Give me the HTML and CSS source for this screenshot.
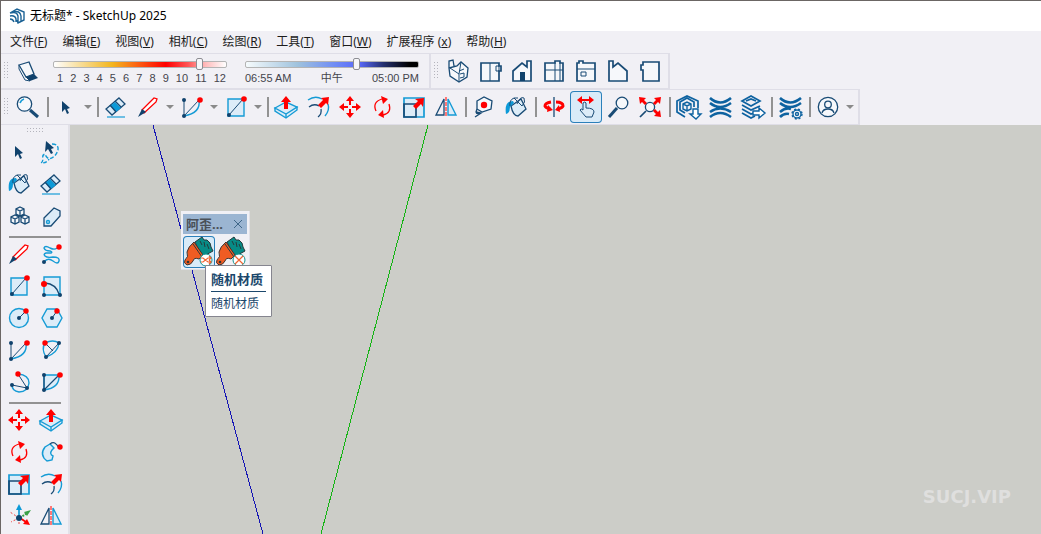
FILE: index.html
```html
<!DOCTYPE html>
<html lang="zh-CN">
<head>
<meta charset="utf-8">
<title>无标题* - SketchUp 2025</title>
<link rel="stylesheet" href="styles.css">
</head>
<body>
<svg class="sprite" aria-hidden="true">
  <symbol id="i-shadow" viewBox="0 0 32 32"><path class="pale ln thin" d="M7 10v4l6 11 5 1-4-4"/><path class="pale ln" d="M7 10l10-3 5 12-8 3z"/><path class="navy" d="M14 22l8-3 4 4-8 3z"/></symbol>
  <symbol id="i-iso" viewBox="0 0 32 32"><path class="pale ln" d="M7 13l8-2 4-4 7 6-1 9-8 5-9-6zM7 13V6l4-1 1 6"/><path class="ln thin" d="M8 13l9 6v7M17 19l2-12M17 16l5-2M18 19l4-1v4l-4 1"/></symbol>
  <symbol id="i-top" viewBox="0 0 32 32"><path class="pale ln thick" d="M7 8h18v3h2v5h-2v10H7z"/><path class="ln thin" d="M16 8v18M22 11h3v5h-3z"/></symbol>
  <symbol id="i-front" viewBox="0 0 32 32"><path class="pale ln thick" d="M7 26V16l9-8 5 4V6h4v20z"/><path class="navy" d="M14 17h5v9h-5z"/></symbol>
  <symbol id="i-right" viewBox="0 0 32 32"><path class="pale ln thick" d="M7 8h10V6h5v2h3v18H7z"/><path class="ln thin" d="M7 15h18M17 8v18M22 8v18"/></symbol>
  <symbol id="i-back" viewBox="0 0 32 32"><path class="pale ln thick" d="M7 8h2V6h4v2h12v18H7z"/><path class="ln thin" d="M7 14h18M11 17h5v4h-5z"/></symbol>
  <symbol id="i-left" viewBox="0 0 32 32"><path class="pale ln thick" d="M7 26V6h4v6l5-4 9 8v10z"/></symbol>
  <symbol id="i-bottom" viewBox="0 0 32 32"><path class="pale ln thick" d="M9 7h16v19H9V15H7v-5h2z"/></symbol>

  <symbol id="i-search" viewBox="0 0 32 32"><circle class="pale ln" cx="12.5" cy="13" r="7.2"/><path class="ln heavy" d="M18 19l8 7"/><path class="sky thick" d="M8 12q1-3 4-4"/></symbol>
  <symbol id="i-select" viewBox="0 0 32 32"><path class="navy" d="M12 10l8 7-3 1 2 4-2 1-2-5-3 3z"/></symbol>
  <symbol id="i-lasso" viewBox="1 0 32 32"><path class="sky dash" d="M18 8q7 0 6 6-2 7-9 9-3-2-4-5-3 1-2 4 0 4-2 5 6 0 8-4"/><path class="navy" d="M12 5l8 7-3 1 2 4-2 1-3-5-3 3z"/></symbol>
  <symbol id="i-eraser" viewBox="0 0 32 32"><path class="tint ln" d="M19 7l6 6-13 11-6-6z"/><path class="blue" d="M15 11l6 6-5 4-6-6z"/><path class="ln" d="M15 10l6 6M10 14l6 7"/><path class="sky thick" d="M7 26h18" opacity=".7"/></symbol>
  <symbol id="i-pencil" viewBox="0 0 32 32"><path class="white rln" d="M10 19L22 7l3 1-1 3-12 11z"/><path class="navy" d="M6 26l4-8 4 3z"/></symbol>
  <symbol id="i-arc" viewBox="0 0 32 32"><path class="ln thin" d="M8 9v16L23 9"/><path class="sky" d="M23 9q2 13-15 16"/><circle class="navy" cx="8" cy="9" r="2"/><circle class="navy" cx="8" cy="25" r="2"/><circle class="red" cx="24" cy="9" r="2.8"/></symbol>
  <symbol id="i-rect" viewBox="0 0 32 32"><path class="tint sky" d="M8 8h16v17H8z"/><path class="ln thin" d="M9 24L23 8"/><circle class="navy" cx="9" cy="24" r="2"/><circle class="red" cx="24" cy="8" r="2.8"/></symbol>
  <symbol id="i-rrect" viewBox="0 0 32 32"><path class="tint sky" d="M9 7h16v18H9z"/><path class="ln" d="M10 13q11 1 14 11"/><circle class="red" cx="9" cy="14" r="3"/><circle class="navy" cx="9" cy="25" r="2"/><circle class="navy" cx="25" cy="25" r="2"/></symbol>
  <symbol id="i-circle" viewBox="1 0 32 32"><circle class="tint sky" cx="17" cy="16" r="9.5"/><path class="ln thin" d="M17 16l7-7"/><circle class="navy" cx="17" cy="16" r="2"/><circle class="red" cx="24" cy="9" r="2.7"/></symbol>
  <symbol id="i-poly" viewBox="0 0 32 32"><path class="tint sky" d="M12 7h10l5 9-5 9H12l-5-9z"/><path class="ln thin" d="M17 16l5-7"/><circle class="navy" cx="17" cy="16" r="2"/><circle class="red" cx="22" cy="9" r="2.7"/></symbol>
  <symbol id="i-freehand" viewBox="0 0 32 32"><path class="sky" d="M9 24q4-5 9-1 5 4 6 0 1-4-6-4-6 1-8-1M10 18q-2-2 1-3h5q2-1-1-2-5 0-6-3 1-3 6 0 6 3 9-2"/><circle class="navy" cx="9" cy="24" r="2"/><circle class="red" cx="24" cy="9" r="2.7"/></symbol>
  <symbol id="i-arc2" viewBox="0 0 32 32"><path class="sky" d="M10 9q8-4 14 0-1 10-13 14Q6 15 10 9"/><path class="ln thin" d="M11 23L24 9M10 9l8 8"/><circle class="red" cx="10" cy="9" r="2.7"/><circle class="navy" cx="24" cy="9" r="2"/><circle class="navy" cx="11" cy="23" r="2"/></symbol>
  <symbol id="i-arc3" viewBox="1 0 32 32"><path class="sky" d="M16 8q11 1 11 9-1 9-10 9-7-1-7-7"/><path class="ln thin" d="M16 8l9 14-15-3"/><circle class="red" cx="16" cy="8" r="2.7"/><circle class="navy" cx="10" cy="19" r="2"/><circle class="navy" cx="25" cy="22" r="2"/></symbol>
  <symbol id="i-pie" viewBox="0 0 32 32"><path class="tint sky" d="M9 9h15q1 13-15 15z"/><path class="ln" d="M9 9v15L24 9"/><circle class="navy" cx="9" cy="9" r="2"/><circle class="navy" cx="9" cy="24" r="2"/><circle class="red" cx="25" cy="9" r="2.8"/></symbol>
  <symbol id="i-push" viewBox="0 0 32 32"><path class="tint sky" d="M5 17v3l11 7 11-8v-3z"/><path class="tint sky" d="M5 17l11-6 11 5-11 7zM16 23v4"/><path class="red" d="M16 5l5 6h-3v7h-4v-7h-3z"/></symbol>
  <symbol id="i-offset" viewBox="0 0 32 32"><path class="sky" d="M6 9q7-5 14-1M26 13q2 6-3 12"/><path class="ln" d="M7 16q5-4 10-1M19 18q1 5-3 8"/><path class="red" d="M27 6l-1 8-2-2-5 5-3-3 5-5-2-2z"/></symbol>
  <symbol id="i-move" viewBox="0 0 32 32"><path class="red" d="M16 5l4 5h-3v4h-2v-4h-3zM16 27l4-5h-3v-4h-2v4h-3zM5 16l5-4v3h4v2h-4v3zM27 16l-5-4v3h-4v2h4v3z"/></symbol>
  <symbol id="i-rotate" viewBox="0 0 32 32"><path class="rln" d="M10 20q-4-9 6-12M23 13q3 9-6 11"/><path class="red" d="M15 5l7 3-5 5zM18 27l-6-3 5-5z"/></symbol>
  <symbol id="i-scale" viewBox="0 0 32 32"><path class="tint sky thick" d="M6 7h20v19H6z"/><path class="ln thick" d="M6 13h12v13H6z"/><path class="red" d="M26 7l-1 9-2-3-5 5-3-3 5-5-3-2z"/></symbol>
  <symbol id="i-mirror" viewBox="0 0 32 32"><path class="ln" d="M14 8v16H6z"/><path class="tint sky" d="M18 8v16h8z"/><path class="rose" d="M16 6v20"/></symbol>
  <symbol id="i-tape" viewBox="0 0 32 32"><path class="pale ln" d="M9 10l7-4 8 4-1 8-9 3-5-3z"/><path class="ln" d="M9 18l-1 3 5 1-6 4M8 22l4 1"/><circle class="red" cx="16" cy="14" r="3.2"/></symbol>
  <symbol id="i-paint" viewBox="0 0 32 32"><path class="tint ln" d="M11 15l10-7 5 10-8 7q-5 0-7-10z"/><path class="blue" d="M13 10Q4 10 6 23q4-1 4-7l4-4z"/><path class="ln thin" d="M10 15q-1-6 4-8l8 8M14 7h4M17 13q3-8 7-6 2 4-2 8"/></symbol>
  <symbol id="i-orbit" viewBox="0 0 32 32"><path class="rln heavy" d="M13 11q-6 1-6 4 1 2 5 3M18 11q7 0 7 4-1 2-5 3"/><path class="red" d="M10 14l5 5-6 2zM21 14l-4 5 5 2z"/><path class="ln" d="M16 6v20"/></symbol>
  <symbol id="i-pan" viewBox="0 0 32 32"><path class="red" d="M7 9l5-4v3h7V5l5 4-5 4v-3h-7v3z"/><path class="tint ln thin" d="M13 12q2-2 3 0v5q8 0 8 4l-2 5h-6l-6-7q1-2 3 0z"/></symbol>
  <symbol id="i-magnify" viewBox="0 0 32 32"><circle class="pale ln" cx="20" cy="12" r="5.8"/><path class="ln heavy" d="M15 17l-8 9"/></symbol>
  <symbol id="i-extents" viewBox="0 0 32 32"><circle class="pale ln" cx="16" cy="16" r="4.6"/><path class="ln thick" d="M12 20l-6 6"/><path class="red" d="M5 6l7 1-2 2 3 3-2 2-3-3-2 2zM27 6l-7 1 2 2-3 3 2 2 3-3 2 2zM27 26l-7-1 2-2-3-3 2-2 3 3 2-2z"/></symbol>
  <symbol id="i-ware" viewBox="0 0 32 32"><path class="bln thick" d="M13 26l-8-5V10l10-5 11 5v7M13 22l-5-3v-8l7-4 7 4v5"/><path class="bln" d="M11 13l4-2 4 2v5l-4 2-4-2zM11 13l4 2 4-2M15 15v5"/><path class="white bln" d="M21 18h5v5h3l-5 5-6-5h3z"/></symbol>
  <symbol id="i-ext" viewBox="0 0 32 32"><path class="bln wave" d="M6 7q10 9 21 0M6 12q10 8 21 0M6 21q10-7 21 0M6 26q10-8 21 0M12 16h8"/></symbol>
  <symbol id="i-layers" viewBox="0 0 32 32"><path class="bln thick" d="M6 10l9-5 9 5-9 5zM10 10l5-2 5 2M6 14l9 5 9-4M6 18l9 5 3-1M6 22l9 5 4-2"/><path class="white bln" d="M17 20h6v-3l6 5-6 5v-3h-6z"/></symbol>
  <symbol id="i-extgear" viewBox="0 0 32 32"><path class="bln wave" d="M6 7q10 9 21 0M6 12q10 8 21 0M6 21q6-5 11-3M6 26q4-4 9-3"/><circle class="pale bln" cx="23" cy="23" r="4"/><circle class="bln" cx="23" cy="23" r="5" stroke-dasharray="2 2"/><circle class="bln" cx="23" cy="23" r="1.5"/></symbol>
  <symbol id="i-account" viewBox="0 0 32 32"><circle class="pale ln" cx="16" cy="16" r="9.7"/><circle class="ln" cx="16" cy="13.5" r="3.3"/><path class="ln" d="M10 22q1-4 6-4t6 4"/></symbol>
  <symbol id="i-cubes" viewBox="0 0 32 32"><path class="pale ln" d="M17 7l4 2v5l-4 2-4-2V9zM13 9l4 2 4-2M17 11v5M12 15l4 2v5l-4 2-4-2v-5zM8 17l4 2 4-2M12 19v5M22 15l4 2v5l-4 2-4-2v-5zM18 17l4 2 4-2M22 19v5"/></symbol>
  <symbol id="i-tag" viewBox="1 0 32 32"><path class="tint ln" d="M10 18L20 8l6 3v5L17 26H10z"/><circle class="sky" cx="14" cy="22" r="1.5"/></symbol>
  <symbol id="i-follow" viewBox="0 0 32 32"><path class="tint sky" d="M15 8l-5 3q-6 8 2 14l5-1 1-4q-4-2-1-6l2-2z"/><path class="ln" d="M15 8q5-4 9 4"/><circle class="red" cx="25" cy="11" r="2.7"/></symbol>
  <symbol id="i-axes" viewBox="0 0 32 32"><path class="dots" d="M16 18L7 12M16 18l-8 4M16 18v8"/><path class="sky thick" d="M16 17V9"/><path class="blue" d="M16 4l3 6h-6z"/><path class="gln" d="M17 18l7-5"/><path class="green" d="M28 10l-4 6-3-4z"/><path class="rln thick" d="M17 18l6 4"/><path class="red" d="M27 25l-7-1 4-5z"/><circle class="navy" cx="16" cy="18" r="3"/></symbol>
  <symbol id="i-brush" viewBox="0 0 32 32"><path class="teal" d="M12 6l7-5 2 3h3l3 3 1 4 2 4-11 6z"/><path class="leaf" d="M19 9l-2-4M22 11l-1-5M26 13l-2-5"/><path class="orange" d="M11 6l9 13-4 4q-5-2-6 2-2 4-6 4-4-2-2-5 4-3 2-8 1-5 7-10z"/><path class="leaf" d="M10 8l9 13"/><circle class="hole" cx="5" cy="26" r="1.3"/></symbol>
  <symbol id="i-random" viewBox="0 0 32 32"><use href="#i-brush"/><circle class="badge" cx="23" cy="24" r="6"/><path class="mark" d="M18 22h2l5 4h3M18 26h2l5-4h3M26 20l2 2-2 2M26 24l2 2-2 2"/></symbol>
  <symbol id="i-clear" viewBox="0 0 32 32"><use href="#i-brush"/><circle class="badge" cx="24" cy="24" r="6"/><path class="mark" d="M20 20l8 8M28 20l-8 8"/></symbol>
</svg>

<div class="window">
  <header class="titlebar">
    <svg class="logo" viewBox="0 0 16 16" aria-hidden="true"><path class="logo-line" d="M1 5l7-4 7 3v8l-6 3-1-3M1 5q7-2 8 3v7M1 8q5-1 6 3v3M1 11q3 0 4 3M4 4q7-2 8 4v5"/></svg>
    <h1 class="title">无标题* - SketchUp 2025</h1>
  </header>

  <nav class="menubar" aria-label="菜单">
    <button class="menu">文件(<u>F</u>)</button>
    <button class="menu">编辑(<u>E</u>)</button>
    <button class="menu">视图(<u>V</u>)</button>
    <button class="menu">相机(<u>C</u>)</button>
    <button class="menu">绘图(<u>R</u>)</button>
    <button class="menu">工具(<u>T</u>)</button>
    <button class="menu">窗口(<u>W</u>)</button>
    <button class="menu">扩展程序 (<u>x</u>)</button>
    <button class="menu">帮助(<u>H</u>)</button>
  </nav>

  <div class="toolrow">
    <div class="toolbar shadows" role="toolbar" aria-label="阴影">
      <span class="grip"></span>
      <button class="tool" aria-label="显示阴影"><svg><use href="#i-shadow"/></svg></button>
      <div class="slider">
        <input class="range date" type="range" min="0" max="100" value="86" aria-label="日期">
        <div class="scale months"><span>1</span><span>2</span><span>3</span><span>4</span><span>5</span><span>6</span><span>7</span><span>8</span><span>9</span><span>10</span><span>11</span><span>12</span></div>
      </div>
      <div class="slider">
        <input class="range time" type="range" min="0" max="100" value="65" aria-label="时间">
        <div class="scale"><span>06:55 AM</span><span>中午</span><span>05:00 PM</span></div>
      </div>
    </div>
    <div class="toolbar views" role="toolbar" aria-label="视图">
      <span class="grip"></span>
      <button class="tool" aria-label="等轴"><svg><use href="#i-iso"/></svg></button>
      <button class="tool" aria-label="俯视图"><svg><use href="#i-top"/></svg></button>
      <button class="tool" aria-label="前视图"><svg><use href="#i-front"/></svg></button>
      <button class="tool" aria-label="右视图"><svg><use href="#i-right"/></svg></button>
      <button class="tool" aria-label="后视图"><svg><use href="#i-back"/></svg></button>
      <button class="tool" aria-label="左视图"><svg><use href="#i-left"/></svg></button>
      <button class="tool" aria-label="底视图"><svg><use href="#i-bottom"/></svg></button>
    </div>
  </div>

  <div class="toolrow">
    <div class="toolbar" role="toolbar" aria-label="使用入门">
      <span class="grip"></span>
      <button class="tool" aria-label="搜索"><svg><use href="#i-search"/></svg></button>
      <span class="sep"></span>
      <button class="tool" aria-label="选择"><svg><use href="#i-select"/></svg></button>
      <button class="caret" aria-label="更多选择工具"></button>
      <span class="sep"></span>
      <button class="tool" aria-label="擦除"><svg><use href="#i-eraser"/></svg></button>
      <button class="tool" aria-label="直线"><svg><use href="#i-pencil"/></svg></button>
      <button class="caret" aria-label="更多直线工具"></button>
      <button class="tool" aria-label="圆弧"><svg><use href="#i-arc"/></svg></button>
      <button class="caret" aria-label="更多圆弧工具"></button>
      <button class="tool" aria-label="矩形"><svg><use href="#i-rect"/></svg></button>
      <button class="caret" aria-label="更多形状工具"></button>
      <span class="sep"></span>
      <button class="tool" aria-label="推/拉"><svg><use href="#i-push"/></svg></button>
      <button class="tool" aria-label="偏移"><svg><use href="#i-offset"/></svg></button>
      <button class="tool" aria-label="移动"><svg><use href="#i-move"/></svg></button>
      <button class="tool" aria-label="旋转"><svg><use href="#i-rotate"/></svg></button>
      <button class="tool" aria-label="缩放"><svg><use href="#i-scale"/></svg></button>
      <button class="tool" aria-label="翻转"><svg><use href="#i-mirror"/></svg></button>
      <span class="sep"></span>
      <button class="tool" aria-label="卷尺"><svg><use href="#i-tape"/></svg></button>
      <button class="tool" aria-label="材质"><svg><use href="#i-paint"/></svg></button>
      <span class="sep"></span>
      <button class="tool" aria-label="环绕观察"><svg><use href="#i-orbit"/></svg></button>
      <button class="tool active" aria-label="平移" aria-pressed="true"><svg><use href="#i-pan"/></svg></button>
      <button class="tool" aria-label="视图缩放"><svg><use href="#i-magnify"/></svg></button>
      <button class="tool" aria-label="充满视窗"><svg><use href="#i-extents"/></svg></button>
      <span class="sep"></span>
      <button class="tool" aria-label="3D Warehouse"><svg><use href="#i-ware"/></svg></button>
      <button class="tool" aria-label="Extension Warehouse"><svg><use href="#i-ext"/></svg></button>
      <button class="tool" aria-label="发送到 LayOut"><svg><use href="#i-layers"/></svg></button>
      <span class="sep"></span>
      <button class="tool" aria-label="扩展程序管理器"><svg><use href="#i-extgear"/></svg></button>
      <span class="sep"></span>
      <button class="tool" aria-label="账户"><svg><use href="#i-account"/></svg></button>
      <button class="caret" aria-label="账户菜单"></button>
    </div>
  </div>

  <div class="workspace">
    <aside class="palette" aria-label="大工具集">
      <span class="grip wide"></span>
      <div class="grid">
        <button class="tool" aria-label="选择"><svg><use href="#i-select"/></svg></button>
        <button class="tool" aria-label="套索"><svg><use href="#i-lasso"/></svg></button>
        <button class="tool" aria-label="材质"><svg><use href="#i-paint"/></svg></button>
        <button class="tool" aria-label="擦除"><svg><use href="#i-eraser"/></svg></button>
        <button class="tool" aria-label="制作组件"><svg><use href="#i-cubes"/></svg></button>
        <button class="tool" aria-label="标记"><svg><use href="#i-tag"/></svg></button>
        <span class="rule"></span>
        <button class="tool" aria-label="直线"><svg><use href="#i-pencil"/></svg></button>
        <button class="tool" aria-label="手绘线"><svg><use href="#i-freehand"/></svg></button>
        <button class="tool" aria-label="矩形"><svg><use href="#i-rect"/></svg></button>
        <button class="tool" aria-label="旋转矩形"><svg><use href="#i-rrect"/></svg></button>
        <button class="tool" aria-label="圆"><svg><use href="#i-circle"/></svg></button>
        <button class="tool" aria-label="多边形"><svg><use href="#i-poly"/></svg></button>
        <button class="tool" aria-label="圆弧"><svg><use href="#i-arc"/></svg></button>
        <button class="tool" aria-label="两点圆弧"><svg><use href="#i-arc2"/></svg></button>
        <button class="tool" aria-label="三点圆弧"><svg><use href="#i-arc3"/></svg></button>
        <button class="tool" aria-label="扇形"><svg><use href="#i-pie"/></svg></button>
        <span class="rule"></span>
        <button class="tool" aria-label="移动"><svg><use href="#i-move"/></svg></button>
        <button class="tool" aria-label="推/拉"><svg><use href="#i-push"/></svg></button>
        <button class="tool" aria-label="旋转"><svg><use href="#i-rotate"/></svg></button>
        <button class="tool" aria-label="路径跟随"><svg><use href="#i-follow"/></svg></button>
        <button class="tool" aria-label="缩放"><svg><use href="#i-scale"/></svg></button>
        <button class="tool" aria-label="偏移"><svg><use href="#i-offset"/></svg></button>
        <button class="tool" aria-label="坐标轴"><svg><use href="#i-axes"/></svg></button>
        <button class="tool" aria-label="翻转"><svg><use href="#i-mirror"/></svg></button>
      </div>
    </aside>

    <main class="viewport">
      <svg class="axes" aria-hidden="true">
        <path class="axis-blue" d="M83 0L193 409"/>
        <path class="axis-green" d="M358 0L251 409"/>
      </svg>
      <section class="float">
        <header class="float-head"><h2 class="float-title">阿歪...</h2><button class="close" aria-label="关闭"><svg viewBox="0 0 10 10"><path class="close-line" d="M1 1l8 8M9 1L1 9"/></svg></button></header>
        <div class="float-tools">
          <button class="tool active" aria-label="随机材质"><svg><use href="#i-random"/></svg></button>
          <button class="tool" aria-label="清除材质"><svg><use href="#i-clear"/></svg></button>
        </div>
        <div class="tooltip" role="tooltip"><strong class="tip-title">随机材质</strong><span class="tip-text">随机材质</span></div>
      </section>
      <span class="watermark">SUCJ.VIP</span>
    </main>
  </div>
</div>
</body>
</html>
```
FILE: styles.css
```css
* { box-sizing: border-box; }
body {
  margin: 0;
  font: 12px/16px "Noto Sans", "Noto Sans CJK SC", sans-serif;
  color: #1c1c1c;
}
button {
  margin: 0;
  padding: 0;
  border: 0;
  background: none;
  font: inherit;
  color: inherit;
}
h1, h2 { margin: 0; font-size: 12px; font-weight: 400; }
.sprite { position: absolute; width: 0; height: 0; }

.window {
  display: flex;
  flex-direction: column;
  height: 100vh;
  overflow: hidden;
  background: #f1f0f5;
  border-top: 1px solid #6b6664;
  border-left: 1px solid #6b6664;
}
.titlebar {
  display: flex;
  flex: none;
  align-items: center;
  gap: 5px;
  height: 30px;
  padding-left: 8px;
  background: #fff;
}
.logo { width: 16px; height: 16px; }
.logo-line { fill: none; stroke: #1b6295; stroke-width: 1.4; }
.title { color: #000; }

.menubar {
  display: flex;
  flex: none;
  align-items: center;
  gap: 15px;
  height: 22px;
  padding-left: 9px;
}
.menu { white-space: nowrap; }

/* Docked toolbars */
.toolrow { display: flex; flex: none; height: 36px; }
.toolbar {
  display: flex;
  align-items: center;
  padding: 0 2px 0 3px;
  border: solid #dfdee7;
  border-width: 1px 2px 1px 0;
}
.grip {
  width: 5px;
  height: 18px;
  margin-right: 3px;
  background: conic-gradient(from 270deg at 1px 1px, #b4b4bc 90deg, transparent 0) 0 0 / 3px 3px;
}
.tool {
  display: grid;
  place-items: center;
  flex: none;
  width: 32px;
  height: 32px;
}
.tool svg { display: block; width: 32px; height: 32px; }
.tool.active {
  background: #d9ebf8;
  box-shadow: inset 0 0 0 1px #2b80ba;
  border-radius: 4px;
}
.sep { width: 6px; height: 20px; background: linear-gradient(#929292, #929292) 3px 0 / 2px 100% no-repeat; }
.caret { display: grid; place-items: center; width: 12px; height: 32px; }
.caret::before {
  content: "";
  border: 4px solid transparent;
  border-top-color: #8a8a8a;
  border-bottom: 0;
}

/* Shadow sliders */
.shadows { padding-right: 10px; }
.slider { display: grid; gap: 1px; width: 174px; margin-left: 9px; }
.slider + .slider { margin-left: 18px; }
.range {
  appearance: none;
  width: 100%;
  height: 12px;
  margin: 0;
  background: none;
}
.range::-webkit-slider-runnable-track {
  height: 7px;
  border: 1px solid #b4b4b4;
  border-radius: 2px;
  background: var(--track);
}
.range::-webkit-slider-thumb {
  appearance: none;
  width: 7px;
  height: 12px;
  margin-top: -4px;
  border: 1px solid #8d8d93;
  border-radius: 2px;
  background: #f6f6f8;
}
.date { --track: linear-gradient(90deg, #fff, #f8dc94 16%, #f3b51c 34%, #fb6a14 47%, #f00 65%, #f55 78%, #fbb 88%, #fff); }
.time { --track: linear-gradient(90deg, #f6fbfd, #9fc2dd 30%, #6f8bf5 52%, #5968f8 66%, #25306e 80%, #000 95%); }
.scale {
  display: flex;
  justify-content: space-between;
  font: 11px/12px "Liberation Sans", "Noto Sans CJK SC", sans-serif;
  color: #44444c;
}
.months { padding: 0 1px 0 4px; }

/* Icon paints */
.navy { fill: #10426c; }
.red { fill: #f00; }
.blue { fill: #0c9ad8; }
.green { fill: #3ba046; }
.ln { fill: none; stroke: #194b75; stroke-width: 1.3; }
.rln { fill: none; stroke: #f00; stroke-width: 1.3; }
.gln { fill: none; stroke: #3ba046; stroke-width: 2; stroke-dasharray: 2 1; }
.sky { fill: none; stroke: #159bd5; stroke-width: 1.4; }
.bln { fill: none; stroke: #0d62a0; stroke-width: 1.4; }
.rose { fill: none; stroke: #f77; stroke-width: 2; stroke-dasharray: 4 1; }
.dots { fill: none; stroke: #e44; stroke-dasharray: 2 2; }
.dash { stroke-dasharray: 4 2; }
.pale { fill: #f6f8fb; }
.tint { fill: #dcecf8; }
.white { fill: #fff; }
.thin { stroke-width: 1; }
.thick { stroke-width: 1.7; }
.heavy { stroke-width: 3; }
.wave { stroke-width: 2.6; }
.teal { fill: #078b86; stroke: #26383b; }
.leaf { stroke: #26383b; }
.orange { fill: #ef5c23; stroke: #3c3431; }
.hole { fill: #333; }
.badge { fill: #fff; stroke: #129490; }
.mark { fill: none; stroke: #f06432; stroke-width: 1.2; }

.workspace { display: flex; flex: 1; min-height: 0; }
.palette {
  flex: none;
  width: 69px;
  padding: 3px 1px 0 2px;
  overflow: hidden;
  border-right: 2px solid #e2e1e8;
}
.grip.wide { display: block; width: 17px; height: 5px; margin: 0 auto 3px; }
.grid { display: grid; grid-template-columns: 32px 32px; }
.rule {
  grid-column: 1 / -1;
  height: 6px;
  margin: 0 6px;
  border-bottom: 2px solid #929292;
}

.viewport {
  position: relative;
  flex: 1;
  overflow: hidden;
  background: #cccdc8;
}
.axes { position: absolute; inset: 0; width: 100%; height: 100%; }
.axis-blue { stroke: #1414b4; shape-rendering: crispEdges; }
.axis-green { stroke: #14b414; shape-rendering: crispEdges; }

/* Floating extension toolbar */
.float {
  position: absolute;
  left: 111px;
  top: 86px;
  padding: 3px 2px 1px;
  background: #f0f0f5;
  border: 1px solid #e0e0e6;
  border-width: 0 1px 1px 0;
}
.float-head {
  display: flex;
  align-items: center;
  justify-content: space-between;
  height: 20px;
  margin-bottom: 2px;
  padding: 0 4px 0 3px;
  background: #9bb5d2;
}
.float-title { font-size: 13px; font-weight: 700; color: #4a5058; }
.close svg { display: block; width: 10px; height: 10px; }
.close-line { stroke: #3f6688; }
.float-tools { display: flex; }
.tooltip {
  position: absolute;
  left: 24px;
  top: 54px;
  display: grid;
  width: max-content;
  padding: 5px 5px 4px;
  background: #fff;
  border: 1px solid #85858f;
  border-radius: 1px;
  color: #1c486c;
}
.tip-title { padding: 0 3px 3px 0; border-bottom: 1px solid #1c486c; font-size: 13px; line-height: 17px; }
.tip-text { padding-top: 4px; line-height: 16px; }
.watermark {
  position: absolute;
  right: 30px;
  bottom: 27px;
  font: 700 18px/20px "DejaVu Sans", sans-serif;
  color: #dfdfde;
}
```
